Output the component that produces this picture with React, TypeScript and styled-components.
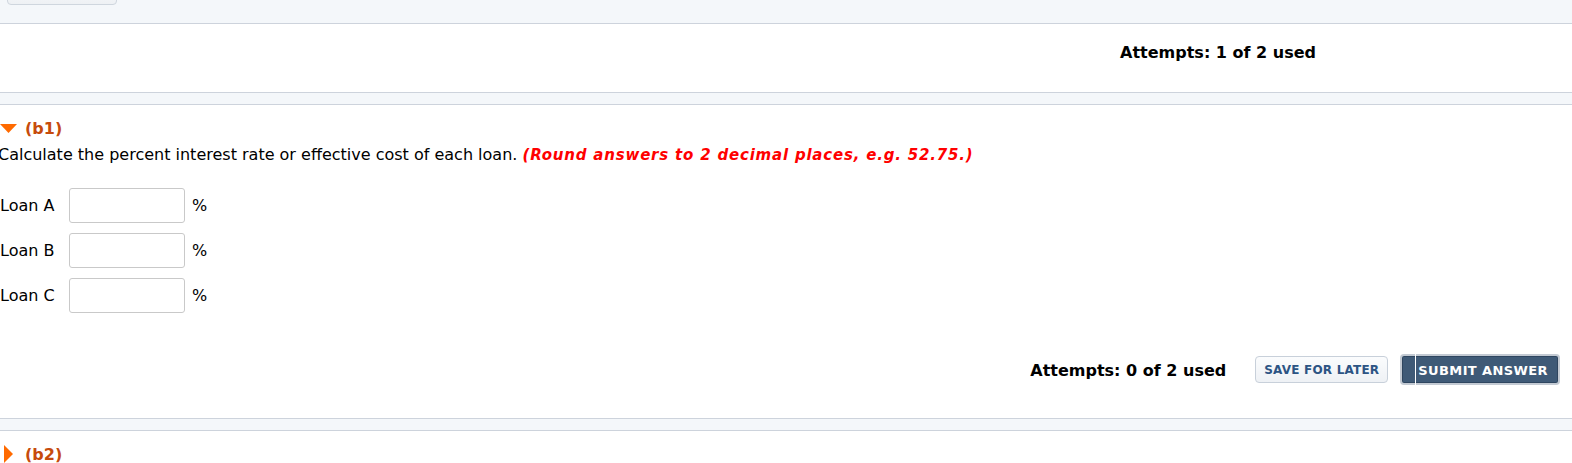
import React from 'react'
import styled, { createGlobalStyle } from 'styled-components'

const GlobalStyle = createGlobalStyle`
  html, body {
    margin: 0;
    padding: 0;
    background: #ffffff;
    overflow: hidden;
  }
  body {
    font-family: Verdana, 'DejaVu Sans', sans-serif;
    color: #000000;
  }
`

const Page = styled.div`
  width: 1572px;
  height: 463px;
  overflow: hidden;
`

const TopStrip = styled.div`
  display: flex;
  align-items: flex-start;
  height: 24px;
  background: #f4f7fa;
  border-bottom: 1px solid #cdd3dc;
  box-sizing: border-box;
  overflow: hidden;
`

const Divider = styled.div`
  height: 13px;
  background: #f4f7fa;
  border-top: 1px solid #cdd3dc;
  border-bottom: 1px solid #cdd3dc;
  box-sizing: border-box;
`

const TabStub = styled.div`
  width: 108px;
  height: 30px;
  margin: -27px 0 0 7px;
  background: linear-gradient(#ffffff, #eef1f4);
  border: 1px solid #cfd6de;
  border-radius: 4px;
`

const AttemptsBar = styled.div`
  height: 68px;
  display: flex;
  align-items: center;
  justify-content: flex-end;
  padding: 0 256px 11px 0;
  box-sizing: border-box;
`

const Attempts = styled.span`
  font-size: 16px;
  font-weight: bold;
  white-space: nowrap;
`

const Section = styled.section`
  padding-top: 13px;
`

const PartHeader = styled.div`
  display: flex;
  align-items: center;
  gap: 8px;
  height: 20px;
  color: #c64b0c;
  font-size: 16px;
  font-weight: bold;
`

const Prompt = styled.p`
  margin: 8px 0 0 -2px;
  font-size: 16px;
  line-height: 18px;
  white-space: nowrap;
`

const Hint = styled.em`
  color: #ff0000;
  font-size: 15px;
  font-weight: bold;
  letter-spacing: 0.8px;
`

const Rows = styled.div`
  display: flex;
  flex-direction: column;
  gap: 10px;
  margin-top: 24px;
`

const Row = styled.label`
  display: flex;
  align-items: center;
  font-size: 16px;
`

const RowLabel = styled.span`
  width: 69px;
`

const Field = styled.input`
  width: 116px;
  height: 35px;
  box-sizing: border-box;
  border: 1px solid #c9c9c9;
  border-radius: 3px;
  padding: 0 6px;
  font: inherit;
  margin-right: 7px;
`

const Actions = styled.div`
  display: flex;
  align-items: center;
  justify-content: flex-end;
  padding: 8px 12px 0 0;
  height: 105px;
  box-sizing: border-box;
`

const ActionAttempts = styled(Attempts)`
  margin-right: 29px;
  margin-top: 1px;
`

const Button = styled.button<{ $primary?: boolean }>`
  position: relative;
  font-family: Verdana, 'DejaVu Sans', sans-serif;
  font-weight: bold;
  cursor: pointer;
  border-radius: 4px;
  white-space: nowrap;
  ${p =>
    p.$primary
      ? `
    height: 31px;
    padding: 2px 10px 0 16px;
    margin-left: 12px;
    font-size: 13px;
    letter-spacing: 0.4px;
    color: #ffffff;
    background: #3f5a77;
    border: 2px solid #c3cad3;
    box-shadow: inset 0 0 0 1px #2f4660;
    &::before {
      content: '';
      position: absolute;
      left: 13px;
      top: -2px;
      bottom: -2px;
      width: 1px;
      background: #ffffff;
    }
  `
      : `
    height: 27px;
    padding: 0 8px;
    font-size: 12px;
    letter-spacing: 0.2px;
    color: #2c5484;
    background: linear-gradient(#fbfcfd, #eef1f5);
    border: 1px solid #c8d0da;
  `}
`

const Caret = ({ open }: { open: boolean }) =>
  open ? (
    <svg width='17' height='10' viewBox='0 0 17 10'>
      <polygon points='0,1 17,1 8.5,10' fill='#ff6a00' />
    </svg>
  ) : (
    <svg width='17' height='18' viewBox='0 0 17 18'>
      <polygon points='4,0 13,9 4,18' fill='#ff6a00' />
    </svg>
  )

const loans = ['Loan A', 'Loan B', 'Loan C']

const App: React.FC = () => {
  return (
    <Page>
      <GlobalStyle />
      <TopStrip>
        <TabStub />
      </TopStrip>
      <AttemptsBar>
        <Attempts>Attempts: 1 of 2 used</Attempts>
      </AttemptsBar>
      <Divider />

      <Section>
        <PartHeader>
          <Caret open />
          <span>(b1)</span>
        </PartHeader>
        <Prompt>
          Calculate the percent interest rate or effective cost of each loan.{' '}
          <Hint>(Round answers to 2 decimal places, e.g. 52.75.)</Hint>
        </Prompt>
        <Rows>
          {loans.map(l => (
            <Row key={l}>
              <RowLabel>{l}</RowLabel>
              <Field type='text' />
              <span>%</span>
            </Row>
          ))}
        </Rows>
        <Actions>
          <ActionAttempts>Attempts: 0 of 2 used</ActionAttempts>
          <Button>SAVE FOR LATER</Button>
          <Button $primary>SUBMIT ANSWER</Button>
        </Actions>
      </Section>

      <Divider />
      <Section>
        <PartHeader>
          <Caret open={false} />
          <span>(b2)</span>
        </PartHeader>
      </Section>
    </Page>
  )
}

export default App
